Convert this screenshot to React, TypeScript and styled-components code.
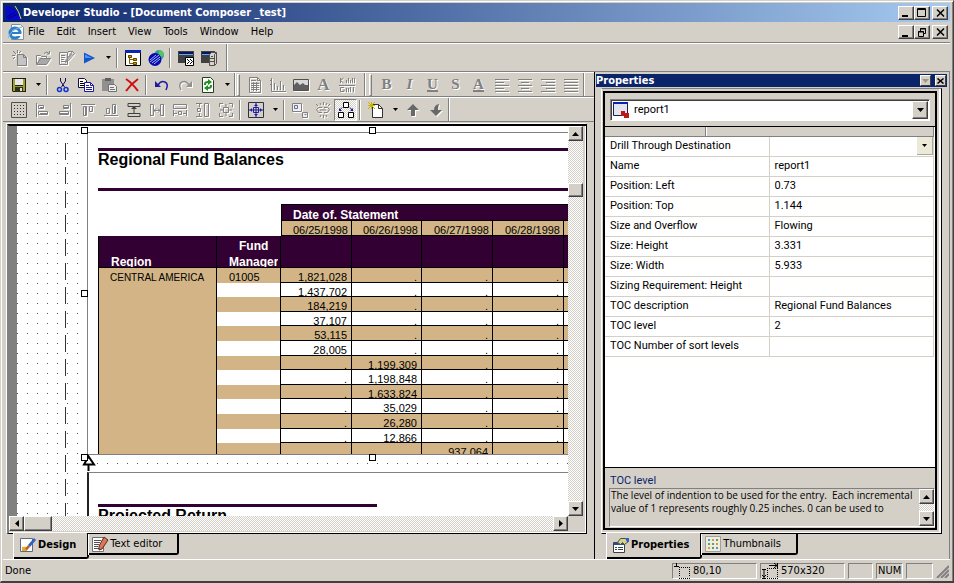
import React from 'react';
import styled, { createGlobalStyle, css } from 'styled-components';

const FACE = '#d4d0c8';
const SHADE = '#808080';
const NAVY = '#0a246a';
const PLUM = '#330033';
const TAN = '#d2b486';
const UI = 'Tahoma, "DejaVu Sans Condensed", "DejaVu Sans", sans-serif';
const SMALL = 'Roboto, "Liberation Sans", Arial, sans-serif';
const REPORT = '"Liberation Sans", Arial, sans-serif';

const Global = createGlobalStyle`
  * { box-sizing: border-box; }
  body { margin: 0; background: ${FACE}; color: #000; font: 11px/14px ${UI}; }
  button, input, select, textarea { font: inherit; color: inherit; margin: 0; padding: 0; border: 0; background: none; border-radius: 0; }
  svg { display: block; flex: none; }
`;

const raised = css`
  background: ${FACE};
  border: 1px solid;
  border-color: #fff #404040 #404040 #fff;
  box-shadow: inset -1px -1px 0 ${SHADE};
`;
const sunken = css`
  border: 1px solid;
  border-color: ${SHADE} #fff #fff ${SHADE};
`;
const dither = css`
  background: repeating-conic-gradient(#fff 0 25%, ${FACE} 0 50%) 0 0 / 2px 2px;
`;

/* ---------- icons ---------- */

const line = (color: string, d: string, w = 1) => <path d={d} fill="none" stroke={color} strokeWidth={w} />;
const fill = (color: string, d: string) => <path d={d} fill={color} />;
const G = '#808080';
const K = '#000';
const B = '#1c1c9c';

const PICS: Record<string, React.ReactNode> = {
  newDoc: <>{fill('#c4c4c4', 'M5 4h7l3 3v9H5z')}{line(G, 'M5.5 4.5h6l3 3v8h-9zM11.5 4.5v3h3M1 1l3 3M5.5 0v3M0 5.5h3M1 9l2-2M9 1L7 3')}</>,
  open: <>{fill('#a8a8a8', 'M2 14l3-6h10l-3 6z')}{line(G, 'M1.5 14V5.5h4l1 1h5v2M1.5 14.5h10l4-6h-10zM9 3.5q3-3 5 0M14.5 1v3h-3')}</>,
  edit: <>{line(G, 'M1.5 2.5h8v12h-8zM3 5.5h4M3 7.5h4M3 9.5h3M3 11.5h5')}{line(G, 'M14.5 1.5l-6 8-1 3 3-2 6-7zM10 1.5h5')}{fill('#a0a0a0', 'M13 3l2 1-5 6-1-1z')}</>,
  play: <>{fill('#1456c8', 'M3 2.5L14 8 3 13.5z')}{fill('#4f94f4', 'M4 4.5L11 8H4z')}</>,
  tree: <>{fill('#fff', 'M0 0h16v16H0z')}{line(K, 'M.5 .5h15v15H.5z')}{fill('#0a24b4', 'M0 0h16v3H0z')}{line('#806000', 'M4.5 7v6.5H8M4.5 9.5H8')}{fill('#c8a000', 'M3 5h4v3H3zM8 8h4v3H8zM8 12h4v3H8z')}{line('#604800', 'M3.5 5.5h3v2h-3zM8.5 8.5h3v2h-3zM8.5 12.5h3v2h-3z')}</>,
  globe: <><circle cx="11" cy="5" r="5" fill="#3c9c8c" />{fill('#54c464', 'M11 0q5 1 5 5l-3 2-2-2z')}<circle cx="7" cy="9.5" r="6.5" fill="#0808b0" />{line('#a0b8f0', 'M2 10l6-5M2 12l9-7M4 13l8-6M6 14l6-5')}</>,
  winCode: <>{fill('#404040', 'M0 1h16v12H0z')}{fill('#0a1464', 'M1 2h14v3H1z')}{fill('#60a8e8', 'M1 4h14v1H1z')}<path d="M7.5 7.5h8v8h-8z" fill="#fff" stroke="#000" />{line(K, 'M9 9l2.5 2.5L9 14M12 9l2.5 2.5L12 14')}</>,
  winServer: <>{fill('#404040', 'M0 1h14v12H0z')}{fill('#0a1464', 'M1 2h12v3H1z')}{fill('#60a8e8', 'M1 4h8v1H1z')}<path d="M8.5 4.5l2-2h5v11l-2 2h-5z" fill="#d8d4cc" stroke="#505050" />{line('#505050', 'M9 8.5h4M9 11.5h4M13.5 4.5v11M13.5 4.5l2-2M10 6.5h2')}</>,
  save: <>{fill('#202010', 'M1 1h14v14H2l-1-1z')}{fill('#a0a030', 'M2 2h2v7h8V2h2v12H2z')}{fill('#e8e8e8', 'M4 2h8v6H4z')}{fill('#303020', 'M4 10h8v5H4z')}{fill('#e0e0e0', 'M9 11h2v3H9z')}</>,
  cut: <>{line('#101050', 'M5.5 1v3l4 6M10.5 1v3l-4 6')}<circle cx="4.5" cy="12.5" r="2" fill="none" stroke="#1030d0" strokeWidth="1.5" /><circle cx="11" cy="12.5" r="2" fill="none" stroke="#1030d0" strokeWidth="1.5" /></>,
  copy: <><path d="M.5 1.5h6l2 2v7h-8z" fill="#fff" stroke="#101040" />{line(K, 'M2 4.5h3M2 6.5h4M2 8.5h4')}<path d="M6.5 5.5h6l3 3v6h-9z" fill="#fff" stroke={B} />{line(B, 'M8 8.5h3M8 10.5h6M8 12.5h6M12.5 5.5v3h3')}</>,
  paste: <>{fill('#909090', 'M1 2h12v12H1z')}{fill('#606060', 'M4 1h6v3H4z')}<path d="M7.5 7.5h6l2 2v5h-8z" fill="#eee" stroke="#707070" />{line('#707070', 'M9 10.5h4M9 12.5h5')}</>,
  del: <>{line('#d01010', 'M2 2q6 4 12 12M14 2Q7 7 2 14', 2)}</>,
  undo: <>{line(B, 'M4 8q3-5 7-3t1 8', 1.5)}{fill(B, 'M1 4v6h6z')}</>,
  redo: <>{line('#909090', 'M12 8q-3-5-7-3t-1 8', 1.5)}{fill('#909090', 'M15 4v6H9z')}</>,
  refresh: <><path d="M2.5 .5h8l3 3v12h-11z" fill="#fff" stroke="#204020" />{line('#209020', 'M5 8V7q0-2 3-2h1M11 8v1q0 2-3 2H7', 2)}{fill('#209020', 'M8 2l4 3-4 3zM8 8l-4 3 4 3z')}</>,
  tableDoc: <>{line(G, 'M2.5 .5h8l3 3v12h-11zM10.5 .5v3h3M4 3.5h5M4 6.5h8M4 8.5h8M4 10.5h8M4 12.5h8M6.5 5v9M9.5 5v9')}</>,
  chart: <>{line(G, 'M1.5 1v13.5H16M4.5 6v7M7.5 9v4M10.5 4v9M13.5 8v5M0 3.5h1M0 7.5h1')}</>,
  image: <>{fill('#d8d8d8', 'M0 2h16v12H0z')}{line('#505050', 'M.5 2.5h15v11H.5z')}{fill('#606060', 'M1 13V8l3-3 3 3 3-2 2 2 3 0v5z')}</>,
  caps: <>{line(G, 'M1.5 1v5M4.5 1l-3 2.5 3 2.5M7.5 3v3M9.5 1v5M11.5 3v3M13.5 1v5M15.5 1v5M0 8.5h16M5 10.5H1.5v4H5v-2M7.5 11v4M9.5 11v4M11.5 10v5M14.5 10v5')}</>,
  alignL: line(G, 'M1 2.5h14M1 5.5h9M1 8.5h14M1 11.5h9M1 14.5h14'),
  alignC: line(G, 'M1 2.5h14M4 5.5h8M1 8.5h14M4 11.5h8M1 14.5h14'),
  alignR: line(G, 'M1 2.5h14M6 5.5h9M1 8.5h14M6 11.5h9M1 14.5h14'),
  alignJ: line(G, 'M1 2.5h14M1 5.5h14M1 8.5h14M1 11.5h14M1 14.5h14'),
  grid: <>{line('#505050', 'M.5 .5h15v15H.5z')}{[3, 6, 9, 12].map((y) => <path key={y} d={`M3 ${y + 0.5}h11`} stroke="#303030" strokeDasharray="1 2" />)}</>,
  objL: line(G, 'M2.5 1v14M4.5 3.5h5v3h-5zM4.5 9.5h9v3h-9zM6 5.5h3M6 11.5h7'),
  objR: line(G, 'M13.5 1v14M6.5 3.5h5v3h-5zM2.5 9.5h9v3h-9zM7 5.5h4M3 11.5h8'),
  objT: line(G, 'M1 2.5h14M3.5 4.5h3v9h-3zM9.5 4.5h3v5h-3zM5.5 5v8'),
  objB: line(G, 'M1 13.5h14M3.5 6.5h3v5h-3zM9.5 2.5h3v9h-3zM11.5 4v7'),
  spaceV: <>{line('#404040', 'M2 1.5h12v3H2zM2 11.5h12v3H2zM8 5v6')}{fill('#404040', 'M5 7l3-3 3 3z')}</>,
  spaceH: line(G, 'M1.5 2v12M1.5 2.5h3v11h-3M14.5 2v12M14.5 2.5h-3v11h3M5 8.5h6M7 6.5l-2 2 2 2M9 6.5l2 2-2 2'),
  sameW: line(G, 'M1.5 2.5h13v4h-13zM1.5 8v6M14.5 8v6M2 11.5h3M11 11.5h3M6.5 9.5h3v3h-3z'),
  sameH: line(G, 'M9.5 1.5h4v13h-4zM1 1.5h6M1 14.5h6M4.5 2v3M4.5 11v3M2.5 6.5h3v3h-3z'),
  sameB: line(G, 'M1.5 5V1.5H5M11 1.5h3.5V5M14.5 11v3.5H11M5 14.5H1.5V11M5.5 5.5h5v5h-5zM8 2v3M8 11v3M2 8h3M11 8h3'),
  center: <>{line('#303040', 'M.5 .5h15v15H.5z')}{line(B, 'M8 1v14M1 8h14M5.5 5.5h5v5h-5z')}{fill(B, 'M6 4h4L8 2zM6 12h4l-2 2zM4 6v4L2 8zM12 6v4l2-2z')}</>,
  resize: <><path d="M.5 1.5h9v8h-9z" fill="#eee" stroke={G} />{line('#6868a8', 'M2.5 3.5h3v3h-3z')}<path d="M10.5 10.5h5v5h-5z" fill="#eee" stroke={G} />{line(G, 'M12.5 12.5h2')}</>,
  link: line(G, 'M7 5.5H3.5l-2 2 2 3H7M9 5.5h3.5l2 2-2 3H9M5 8h6M5 1l1 2M8.5 0v3M12 1l-1 2M5 15l1-2M8.5 16v-3M12 15l-1-2M1 2l2 2M15 2l-2 2'),
  flow: <><g fill="#fff" stroke={K}><path d="M5.5 .5h5v5h-5zM.5 10.5h5v5h-5zM10.5 10.5h5v5h-5z" /></g>{line(B, 'M4 5.5L2 8M12 5.5L14 8')}{fill(B, 'M1 6v3h3zM15 6v3h-3z')}</>,
  newStar: <><path d="M4.5 2.5h6l4 4v9h-10z" fill="#fff" stroke="#303030" />{line('#303030', 'M10.5 2.5v4h4')}{line('#c8b400', 'M0 0l7 7M3.5 0v7M0 3.5h7M7 0L0 7')}</>,
  up: fill('#686868', 'M8 2l6 6h-4v6H6V8H2z'),
  down: fill('#686868', 'M8 14L2 8h4q0-5 5-6-1 3-1 6h4z'),
  design: <><path d="M.5 1.5h12v13H.5z" fill="#fff" stroke="#606880" />{fill('#e8a830', 'M2 10q4-1 6 1l-1 3H2z')}{fill('#3060c0', 'M14 1l2 2-6 7-2-2z')}{fill('#c06020', 'M8 8l2 2-3 3-2-1z')}</>,
  textEdit: <><path d="M.5 1.5h11v14H.5z" fill="#fff" stroke="#707070" />{line('#505050', 'M2 4.5h7M2 6.5h6M2 8.5h5M2 10.5h4M2 12.5h6')}{fill('#d87858', 'M12 1l4 3-6 9-3 1v-4z')}{line('#602818', 'M12 1l4 3-6 9-3 1v-4z')}</>,
  props: <><path d="M.5 5.5h11v10H.5z" fill="#fff" stroke="#404040" />{fill('#2050a0', 'M1 6h11v2H1z')}{line('#404040', 'M2 10.5h2M5 10.5h5M2 12.5h2M5 12.5h5')}<path d="M4.5 5.5l3-4h5l3 3-4 3-2-2-2 2z" fill="#d8d090" stroke="#505030" />{fill('#3060c0', 'M12 1h4v4h-2z')}</>,
  thumbs: <><path d="M.5 .5h15v15H.5z" fill="#f0ece0" stroke="#a0a0a0" />{fill('#40a0c0', 'M3 3h2v2H3zM7 7h2v2H7zM11 11h2v2h-2z')}{fill('#d0a030', 'M7 3h2v2H7zM11 7h2v2h-2zM3 11h2v2H3z')}{fill('#60a050', 'M11 3h2v2h-2zM3 7h2v2H3zM7 11h2v2H7z')}</>,
  report: <>{fill('#e4e4f0', 'M0 1h15v12H0z')}{line('#202040', 'M.5 1.5h14v12H.5z')}{fill('#0a24b4', 'M0 0h15v2H0z')}{fill('#c01818', 'M8 9h4v2h4v5h-5v-2H8z')}</>,
  ie: <><path d="M3.5 .5h9l3 3v12h-12z" fill="#f8f8f0" stroke="#8090a0" /><circle cx="7" cy="9" r="5" fill="none" stroke="#2c80c8" strokeWidth="3" />{fill('#fff', 'M7 10h7v2H7z')}{line('#2c80c8', 'M3 9h9', 2)}{line('#70b8e8', 'M0 14Q3 5 14 3')}</>,
  app: <>{fill('#0808c8', 'M1 1l5 1q6 3 7 7l3 6H1q-1-7 0-14z')}{line('#c8d890', 'M10 1q4 5 6 13')}{line('#000080', 'M2 12l8-5M3 14l9-5')}</>,
  posn: <>{line(K, 'M2.5 0v4M0 3.5h5')}{line(K, 'M5 4.5h1M7 4.5h1M9 4.5h1M11 4.5h1M13 4.5h1M15 4.5h1M5 15.5h1M7 15.5h1M9 15.5h1M11 15.5h1M13 15.5h1M15 15.5h1M5.5 6v1M5.5 8v1M5.5 10v1M5.5 12v1M15.5 6v1M15.5 8v1M15.5 10v1M15.5 12v1')}</>,
  dims: <>{line(K, 'M5 5.5h1M7 5.5h1M9 5.5h1M11 5.5h1M13 5.5h1M15 5.5h1M5 15.5h1M7 15.5h1M9 15.5h1M11 15.5h1M13 15.5h1M15 15.5h1M5.5 7v1M5.5 9v1M5.5 11v1M5.5 13v1M15.5 7v1M15.5 9v1M15.5 11v1M15.5 13v1')}{line(K, 'M0 6.5h4M0 15.5h4M2 7v8M0 12l2 2 2-2M15.5 0v5M7 2.5h8M12 0l3 2.5L12 5')}</>,
  cursor: <><path d="M6.5 1.5L2 9.5h10z" fill="#fff" stroke="#000" strokeWidth="2" />{line(K, 'M6.5 10v6', 2)}</>,
};

const Svg = styled.svg<{ $dim?: boolean }>`
  overflow: visible;
  filter: ${(p) => (p.$dim ? 'drop-shadow(1px 1px 0 #fff)' : 'none')};
`;
const Icon = ({ name, dim }: { name: string; dim?: boolean }) => (
  <Svg width={16} height={16} viewBox="0 0 16 16" $dim={dim} aria-hidden="true">{PICS[name]}</Svg>
);

const TRI = { up: 'M0 4h7L3.5 0z', down: 'M0 0h7L3.5 4z', left: 'M4 0v7L0 3.5z', right: 'M0 0v7l4-3.5z' };
const Tri = ({ dir, color = '#000' }: { dir: keyof typeof TRI; color?: string }) => {
  const tall = dir === 'left' || dir === 'right';
  return <svg width={tall ? 4 : 7} height={tall ? 7 : 4} aria-hidden="true"><path d={TRI[dir]} fill={color} /></svg>;
};
const TinyTri = () => <svg width="5" height="3" aria-hidden="true"><path d="M0 0h5L2.5 3z" /></svg>;

/* ---------- window chrome ---------- */

const Window = styled.div`
  display: flex;
  flex-direction: column;
  height: 100vh;
  overflow: hidden;
  padding: 2px 3px 0 2px;
  background: ${FACE};
  border: 1px solid;
  border-color: ${FACE} #404040 #404040 ${FACE};
  border-bottom-width: 2px;
  box-shadow: inset 1px 1px 0 #fff, inset -1px 0 0 ${SHADE};
`;
const TitleBar = styled.header`
  display: flex;
  align-items: center;
  flex: none;
  height: 19px;
  padding: 0 2px;
  gap: 2px;
  background: linear-gradient(90deg, ${NAVY}, #a6caf0);
`;
const Title = styled.h1`
  flex: 1;
  margin: 0;
  color: #fff;
  font: bold 11px/18px ${UI};
  white-space: nowrap;
`;
const Caption = styled.div`
  display: flex;
  button:last-child { margin-left: 2px; }
`;
const CaptionButton = styled.button`
  ${raised}
  width: 16px;
  height: 14px;
  display: grid;
  place-items: center;
`;
const MenuBar = styled.nav`
  display: flex;
  align-items: center;
  flex: none;
  height: 21px;
  padding: 0 2px 0 5px;
  border-bottom: 1px solid ${SHADE};
`;
const Menus = styled.div`
  display: flex;
  flex: 1;
`;
const MenuItem = styled.button`
  padding: 0 8px 0 4px;
  line-height: 20px;
`;
const ToolRow = styled.div<{ $first?: boolean }>`
  display: flex;
  flex: none;
  height: ${(p) => (p.$first ? 29 : 25)}px;
  padding-left: ${(p) => (p.$first ? 0 : 1)}px;
  border-top: 1px solid #fff;
  border-bottom: 1px solid ${SHADE};
`;
const Strip = styled.div<{ $grip?: boolean; $tight?: boolean }>`
  display: flex;
  align-items: center;
  padding: 0 ${(p) => (p.$grip && !p.$tight ? 1 : 6)}px 0 ${(p) => (p.$tight ? 1 : p.$grip ? 3 : 5)}px;
  border-right: 1px solid ${SHADE};
  box-shadow: 1px 0 0 #fff;
  & + & { margin-left: ${(p) => (p.$tight ? 1 : 2)}px; }
`;
const Grip = styled.span`
  width: 3px;
  height: 22px;
  margin-right: 3px;
  border: 1px solid;
  border-color: #fff ${SHADE} ${SHADE} #fff;
`;
const Tool = styled.button<{ $on?: boolean }>`
  width: 23px;
  height: 22px;
  display: grid;
  place-items: center;
  ${(p) => p.$on && css`${sunken} ${dither}`}
`;
const Drop = styled.button`
  width: 14px;
  height: 22px;
  padding-left: 2px;
  display: grid;
  place-items: center;
`;
const Sep = styled.span`
  width: 2px;
  height: 20px;
  margin: 0 3px 0 2px;
  background: linear-gradient(90deg, ${SHADE} 50%, #fff 50%);
`;
const Glyph = styled.span<{ $italic?: boolean; $under?: boolean; $big?: boolean }>`
  font: ${(p) => (p.$italic ? 'italic ' : '')}bold ${(p) => (p.$big ? 17 : 15)}px/${(p) => (p.$under ? 12 : 15)}px "Liberation Serif", serif;
  color: ${SHADE};
  text-shadow: 1px 1px 0 #fff;
  border-bottom: ${(p) => (p.$under ? `2px solid ${SHADE}` : '0')};
`;

/* ---------- body ---------- */

const Body = styled.main`
  display: flex;
  flex: 1;
  min-height: 0;
`;
const Left = styled.section`
  display: flex;
  flex-direction: column;
  flex: 1;
  min-width: 0;
`;
const DocFrame = styled.div`
  display: grid;
  grid-template: minmax(0, 1fr) 15px / minmax(0, 1fr) 15px;
  flex: 1;
  min-height: 0;
  margin: 2px 7px 0 4px;
  padding-right: 3px;
  padding-bottom: 2px;
  border: solid #000;
  border-left-color: ${SHADE};
  border-width: 2px 1px 1px 2px;
  box-shadow: -1px -1px 0 #fff, inset -1px -1px 0 #fff;
`;
const Canvas = styled.div`
  position: relative;
  overflow: hidden;
  padding: 6px 0 0 78px;
  border-left: 8px solid ${SHADE};
  background-color: #fff;
  background-image:
    repeating-linear-gradient(#333 0 17px, transparent 17px 24px),
    conic-gradient(from 270deg at 1px 1px, #555 90deg, transparent 0);
  background-position: 48px 17px, 10px 7px;
  background-size: 1px 100%, 10px 10px;
  background-repeat: no-repeat, repeat;
`;
const Frame = styled.section<{ $next?: boolean }>`
  width: 570px;
  height: ${(p) => (p.$next ? 320 : 323)}px;
  margin-left: -8px;
  margin-top: ${(p) => (p.$next ? 17 : 0)}px;
  padding: ${(p) => (p.$next ? 31 : 15)}px 0 0 ${(p) => (p.$next ? 9 : 10)}px;
  overflow: hidden;
  background: #fff;
  border: 1px solid ${SHADE};
  border-left: ${(p) => (p.$next ? '2px solid #222' : `1px solid ${SHADE}`)};
`;
const Heading = styled.h2<{ $short?: boolean }>`
  width: ${(p) => (p.$short ? '279px' : 'auto')};
  height: ${(p) => (p.$short ? 'auto' : '43px')};
  margin: 0;
  border-top: 3px solid ${PLUM};
  border-bottom: ${(p) => (p.$short ? 0 : 3)}px solid ${PLUM};
  font: bold 16px/17px ${REPORT};
`;
const Report = styled.table`
  table-layout: fixed;
  width: 537px;
  margin-top: 13px;
  border-spacing: 0;
  font: 11px/19px ${REPORT};
  th, td { padding: 0; vertical-align: top; text-align: right; font-weight: normal; }
`;
const Clip = styled.div<{ $h: number }>`
  height: ${(p) => p.$h}px;
  overflow: hidden;
`;
const DateTitle = styled.th`
  background: ${PLUM};
  border: 1px solid #000;
  color: #fff;
  && { text-align: left; padding-left: 11px; font: bold 12px/20px ${REPORT}; }
`;
const DateCell = styled.th`
  background: ${TAN};
  border-right: 1px solid #000;
  border-bottom: 1px solid #000;
  && { padding-right: 3px; }
  &:nth-child(2) { border-left: 1px solid #000; }
`;
const PlumCell = styled.th`
  background: ${PLUM};
  color: #fff;
  border: 1px solid #000;
  border-left-width: 0;
  border-top-width: 0;
  && { font: bold 12px/16px ${REPORT}; text-align: left; vertical-align: bottom; }
  &:first-child { border-left-width: 1px; }
`;
const HeadText = styled.div`
  height: 31px;
  padding: 2px 0 0 12px;
  overflow: hidden;
  text-align: center;
  width: max-content;
`;
const RegionCell = styled.th`
  background: ${TAN};
  border: 1px solid #000;
  border-top: 0;
  && { text-align: left; padding-left: 11px; font-size: 10px; }
`;
const Row = styled.tr`
  --h: 15px;
  &:nth-child(5n + 2), &:nth-child(5n + 4) { --h: 14px; }
  &:nth-child(odd) td { background: ${TAN}; }
`;
const Cell = styled.td<{ $manager?: boolean }>`
  border-right: 1px solid #000;
  border-bottom: ${(p) => (p.$manager ? 0 : 1)}px solid #000;
  && { text-align: ${(p) => (p.$manager ? 'left' : 'right')}; padding: ${(p) => (p.$manager ? '0 0 0 12px' : '0 4px 0 0')}; }
  > div { height: ${(p) => (p.$manager ? 'var(--h)' : 'calc(var(--h) - 1px)')}; overflow: hidden; }
`;
const Handle = styled.span<{ $x: number; $y: number }>`
  position: absolute;
  left: ${(p) => p.$x}px;
  top: ${(p) => p.$y}px;
  width: 7px;
  height: 7px;
  background: #fff;
  border: 1px solid #000;
`;
const Marker = styled.span`
  position: absolute;
  left: 65px;
  top: 329px;
`;
const Scroll = styled.div<{ $row?: boolean }>`
  ${dither}
  display: flex;
  flex-direction: ${(p) => (p.$row ? 'row' : 'column')};
  min-height: 0;
`;
const ScrollButton = styled.button<{ $end?: boolean }>`
  ${raised}
  flex: none;
  width: 15px;
  height: 15px;
  display: grid;
  place-items: center;
  ${(p) => p.$end && 'margin-top: auto;'}
`;
const HEnd = styled(ScrollButton)`margin-left: auto;`;
const Gap = styled.span`height: 42px;`;
const Thumb = styled.span<{ $w: number; $h: number }>`
  ${raised}
  width: ${(p) => p.$w}px;
  height: ${(p) => p.$h}px;
`;

const Tabs = styled.div<{ $inset: number }>`
  display: flex;
  align-items: flex-start;
  flex: none;
  height: 25px;
  padding-left: ${(p) => p.$inset}px;
`;
const Tab = styled.button<{ $active?: boolean }>`
  display: flex;
  align-items: center;
  gap: 2px;
  height: ${(p) => (p.$active ? 26 : 21)}px;
  padding: 0 ${(p) => (p.$active ? 11 : 15)}px 0 ${(p) => (p.$active ? 6 : 3)}px;
  margin-top: ${(p) => (p.$active ? -1 : 0)}px;
  background: ${FACE};
  border: solid #000;
  border-width: 0 2px 2px 0;
  border-bottom-right-radius: 3px;
  box-shadow: -1px 0 0 #fff;
  font-weight: ${(p) => (p.$active ? 'bold' : 'normal')};
  white-space: nowrap;
  z-index: 1;
`;

/* ---------- properties ---------- */

const Right = styled.aside`
  display: flex;
  flex-direction: column;
  flex: none;
  width: 356px;
  padding: 2px 0 0;
  border-left: 1px solid #000;
  border-right: 1px solid ${SHADE};
`;
const PanelHead = styled.div`
  display: flex;
  align-items: center;
  gap: 4px;
  height: 13px;
  flex: none;
  margin: 0 2px 0 1px;
  padding-right: 1px;
  background: ${NAVY};
  color: #fff;
`;
const PanelTitle = styled.h2`
  flex: 1;
  margin: 0;
  font: bold 11px/13px ${UI};
`;
const MiniButton = styled.button`
  ${raised}
  box-shadow: none;
  width: 11px;
  height: 11px;
  display: grid;
  place-items: center;
`;
const Outer = styled.div`
  display: flex;
  flex: 1;
  min-height: 0;
  margin: 1px 7px 0 6px;
  padding: 2px 4px 3px 1px;
  border: 1px solid;
  border-color: ${SHADE} #000 #000 #fff;
  box-shadow: inset -2px -1px 0 #fff;
`;
const Inner = styled.div`
  display: flex;
  flex-direction: column;
  flex: 1;
  min-width: 0;
  border: 2px solid #000;
`;
const ComboRow = styled.div`
  padding: 6px 5px 5px;
  border-bottom: 1px solid #000;
`;
const Combo = styled.label`
  ${sunken}
  display: flex;
  align-items: center;
  height: 22px;
  padding: 1px 1px 1px 2px;
  gap: 5px;
  background: #fff;
  box-shadow: inset 1px 1px 0 #404040;
`;
const Select = styled.select`
  appearance: none;
  flex: 1;
  font: 11px/16px ${SMALL};
  outline: none;
`;
const ComboArrow = styled.span`
  ${raised}
  width: 16px;
  height: 18px;
  display: grid;
  place-items: center;
`;
const ListPane = styled.div`
  flex: 1;
  min-height: 0;
  background: #fff;
  border-bottom: 1px solid #000;
  padding-right: 1px;
`;
const HeadStrip = styled.div`
  display: flex;
  height: 10px;
  background: ${FACE};
  border-bottom: 1px solid ${SHADE};
  border-right: 1px solid ${SHADE};
`;
const HeadCell = styled.span`
  width: 101px;
  border-right: 1px solid ${SHADE};
  box-shadow: 1px 0 0 #fff;
`;
const PropTable = styled.table`
  width: 100%;
  table-layout: fixed;
  border-spacing: 0;
  font: 11px/16px ${SMALL};
  th, td {
    height: 20px;
    padding: 0 0 2px 5px;
    border-right: 1px solid ${FACE};
    border-bottom: 1px solid ${FACE};
    text-align: left;
    font-weight: normal;
    white-space: nowrap;
  }
  th { width: 50%; }
`;
const DropCell = styled.div`
  display: flex;
  justify-content: flex-end;
  height: 17px;
`;
const FlatDrop = styled.button`
  width: 16px;
  height: 18px;
  display: grid;
  place-items: center;
  background: #ece9d8;
  border: solid #aca899;
  border-width: 0 1px 1px 0;
`;
const Help = styled.div`
  flex: none;
  height: 60px;
  padding: 5px 0 1px 4px;
  font: 11px/16px ${SMALL};
  label { display: block; padding-left: 1px; color: ${NAVY}; line-height: 15px; }
`;
const HelpBox = styled.div`
  ${sunken}
  display: flex;
  height: 39px;
`;
const HelpText = styled.textarea`
  flex: 1;
  min-width: 0;
  resize: none;
  outline: none;
  overflow: hidden;
  padding-left: 1px;
  white-space: pre;
  font: 10px/13px "Open Sans", ${SMALL};
`;

/* ---------- status ---------- */

const Status = styled.footer`
  display: flex;
  flex: none;
  align-items: center;
  gap: 3px;
  height: 22px;
  padding: 0 1px 0 2px;
  border-top: 1px solid #fff;
`;
const Done = styled.span`flex: 1;`;
const Field = styled.span<{ $w: number }>`
  ${sunken}
  display: flex;
  align-items: center;
  gap: 3px;
  width: ${(p) => p.$w}px;
  height: 16px;
  padding-left: 1px;
`;

/* ---------- data ---------- */

const PROPS: [string, string][] = [
  ['Drill Through Destination', ''],
  ['Name', 'report1'],
  ['Position: Left', '0.73'],
  ['Position: Top', '1.144'],
  ['Size and Overflow', 'Flowing'],
  ['Size: Height', '3.331'],
  ['Size: Width', '5.933'],
  ['Sizing Requirement: Height', ''],
  ['TOC description', 'Regional Fund Balances'],
  ['TOC level', '2'],
  ['TOC Number of sort levels', ''],
];
const VALUES: [number, string][] = [
  [0, '1,821,028'], [0, '1,437,702'], [0, '184,219'], [0, '37,107'], [0, '53,115'], [0, '28,005'],
  [1, '1,199,309'], [1, '1,198,848'], [1, '1,633,824'], [1, '35,029'], [1, '26,280'], [1, '12,866'],
  [2, '937,064'],
];
const DATES = ['06/25/1998', '06/26/1998', '06/27/1998', '06/28/1998', ''];
const HELP = 'The level of indention to be used for the entry.  Each incremental\nvalue of 1 represents roughly 0.25 inches. 0 can be used to';

const CaptionSet = ({ restore }: { restore?: boolean }) => (
  <Caption>
    <CaptionButton aria-label="Minimize"><svg width="10" height="9"><path d="M1 7h6v2H1z" /></svg></CaptionButton>
    <CaptionButton aria-label={restore ? 'Restore' : 'Maximize'}>
      <svg width="10" height="9" fill="none" stroke="#000">
        {restore ? <path d="M3.5 3V.5h5v5H7M3 1h6M1.5 3.5h5v5h-5zM1 4h6" /> : <path d="M.5 .5h8v8h-8zM0 1.5h9" />}
      </svg>
    </CaptionButton>
    <CaptionButton aria-label="Close"><svg width="9" height="8"><path d="M1 .5l7 7M8 .5l-7 7" stroke="#000" strokeWidth="1.5" /></svg></CaptionButton>
  </Caption>
);

const T = ({ n, dim, on }: { n: string; dim?: boolean; on?: boolean }) => (
  <Tool aria-label={n} $on={on}><Icon name={n} dim={dim} /></Tool>
);
const D = () => <Drop aria-label="More"><TinyTri /></Drop>;

export default function App() {
  return (
    <>
      <Global />
      <Window>
        <TitleBar>
          <Icon name="app" />
          <Title>Developer Studio - [Document Composer _test]</Title>
          <CaptionSet />
        </TitleBar>
        <MenuBar>
          <Icon name="ie" />
          <Menus>
            {['File', 'Edit', 'Insert', 'View', 'Tools', 'Window', 'Help'].map((m) => <MenuItem key={m}>{m}</MenuItem>)}
          </Menus>
          <CaptionSet restore />
        </MenuBar>
        <ToolRow $first>
          <Strip>
            <T n="newDoc" dim /><T n="open" dim /><T n="edit" dim />
            <T n="play" /><D /><Sep />
            <T n="tree" /><T n="globe" /><Sep />
            <T n="winCode" /><T n="winServer" />
          </Strip>
        </ToolRow>
        <Body>
          <Left>
            <ToolRow>
              <Strip $grip>
                <T n="save" /><D /><Sep />
                <T n="cut" /><T n="copy" /><T n="paste" /><T n="del" /><Sep />
                <T n="undo" /><T n="redo" dim /><T n="refresh" /><D />
              </Strip>
              <Strip $grip $tight>
                <Grip />
                <T n="tableDoc" dim /><T n="chart" dim /><T n="image" dim />
                <Tool aria-label="Text"><Glyph $big>A</Glyph></Tool>
                <T n="caps" dim />
              </Strip>
              <Strip $grip>
                <Grip />
                <Tool aria-label="Bold"><Glyph>B</Glyph></Tool>
                <Tool aria-label="Italic"><Glyph $italic>I</Glyph></Tool>
                <Tool aria-label="Underline"><Glyph $under>U</Glyph></Tool>
                <Tool aria-label="Strike"><Glyph>S</Glyph></Tool>
                <Tool aria-label="Colour"><Glyph $under>A</Glyph></Tool>
                <T n="alignL" dim /><T n="alignC" dim /><T n="alignR" dim /><T n="alignJ" dim />
              </Strip>
            </ToolRow>
            <ToolRow>
              <Strip $grip>
                <T n="grid" />
                {['objL', 'objR', 'objT', 'objB'].map((n) => <T key={n} n={n} dim />)}
                <T n="spaceV" />
                {['spaceH', 'sameW', 'sameH', 'sameB'].map((n) => <T key={n} n={n} dim />)}
                <Sep /><T n="center" /><D /><Sep />
                <T n="resize" dim /><T n="link" dim /><T n="flow" on /><Sep />
                <T n="newStar" /><D /><T n="up" dim /><T n="down" dim />
              </Strip>
            </ToolRow>
            <DocFrame>
              <Canvas>
                <Frame>
                  <Heading>Regional Fund Balances</Heading>
                  <Report>
                    <colgroup>
                      <col width="119" /><col width="64" /><col width="71" /><col width="70" />
                      <col width="71" /><col width="71" /><col width="71" />
                    </colgroup>
                    <thead>
                      <tr>
                        <td colSpan={2} />
                        <DateTitle colSpan={5}><Clip $h={15}>Date of. Statement</Clip></DateTitle>
                      </tr>
                      <tr>
                        <td colSpan={2} />
                        {DATES.map((d) => <DateCell key={d}><Clip $h={14}>{d}</Clip></DateCell>)}
                      </tr>
                      <tr>
                        <PlumCell><HeadText><br />Region</HeadText></PlumCell>
                        <PlumCell><HeadText>Fund<br />Manager</HeadText></PlumCell>
                        {DATES.map((d) => <PlumCell key={d} />)}
                      </tr>
                    </thead>
                    <tbody>
                      {VALUES.map(([col, value], i) => (
                        <Row key={value}>
                          {i === 0 && <RegionCell rowSpan={VALUES.length}>CENTRAL AMERICA</RegionCell>}
                          <Cell $manager><div>{i === 0 ? '01005' : ''}</div></Cell>
                          {DATES.map((d, c) => <Cell key={d}><div>{c === col ? value : '.'}</div></Cell>)}
                        </Row>
                      ))}
                    </tbody>
                  </Report>
                </Frame>
                <Frame $next>
                  <Heading $short>Projected Return</Heading>
                </Frame>
                <Marker><Icon name="cursor" /></Marker>
                <Handle $x={64} $y={1} />
                <Handle $x={352} $y={1} />
                <Handle $x={64} $y={164} />
                <Handle $x={64} $y={328} />
                <Handle $x={352} $y={328} />
              </Canvas>
              <Scroll>
                <ScrollButton aria-label="Scroll up"><Tri dir="up" /></ScrollButton>
                <Gap />
                <Thumb $w={15} $h={14} />
                <ScrollButton $end aria-label="Scroll down"><Tri dir="down" /></ScrollButton>
              </Scroll>
              <Scroll $row>
                <ScrollButton aria-label="Scroll left"><Tri dir="left" /></ScrollButton>
                <Thumb $w={28} $h={15} />
                <HEnd aria-label="Scroll right"><Tri dir="right" /></HEnd>
              </Scroll>
            </DocFrame>
            <Tabs $inset={11}>
              <Tab $active><Icon name="design" />Design</Tab>
              <Tab><Icon name="textEdit" />Text editor</Tab>
            </Tabs>
          </Left>
          <Right>
            <PanelHead>
              <PanelTitle>Properties</PanelTitle>
              <MiniButton aria-label="Panel menu"><Tri dir="down" color="#a09880" /></MiniButton>
              <MiniButton aria-label="Close panel"><svg width="7" height="6"><path d="M.5 .5l6 5M6.5 .5l-6 5" stroke="#000" strokeWidth="1.5" /></svg></MiniButton>
            </PanelHead>
            <Outer>
              <Inner>
                <ComboRow>
                  <Combo>
                    <Icon name="report" />
                    <Select aria-label="Object"><option>report1</option></Select>
                    <ComboArrow><Tri dir="down" /></ComboArrow>
                  </Combo>
                </ComboRow>
                <ListPane>
                  <HeadStrip><HeadCell /></HeadStrip>
                  <PropTable>
                    <tbody>
                      {PROPS.map(([name, value], i) => (
                        <tr key={name}>
                          <th scope="row">{name}</th>
                          <td>{i === 0 ? <DropCell><FlatDrop aria-label="Choose"><TinyTri /></FlatDrop></DropCell> : value}</td>
                        </tr>
                      ))}
                    </tbody>
                  </PropTable>
                </ListPane>
                <Help>
                  <label htmlFor="help">TOC level</label>
                  <HelpBox>
                    <HelpText id="help" readOnly defaultValue={HELP} />
                    <Scroll>
                      <ScrollButton aria-label="Scroll up"><Tri dir="up" /></ScrollButton>
                      <ScrollButton $end aria-label="Scroll down"><Tri dir="down" /></ScrollButton>
                    </Scroll>
                  </HelpBox>
                </Help>
              </Inner>
            </Outer>
            <Tabs $inset={12}>
              <Tab $active><Icon name="props" />Properties</Tab>
              <Tab><Icon name="thumbs" />Thumbnails</Tab>
            </Tabs>
          </Right>
        </Body>
        <Status>
          <Done>Done</Done>
          <Field $w={85}><Icon name="posn" />80,10</Field>
          <Field $w={85}><Icon name="dims" />570x320</Field>
          <Field $w={25} />
          <Field $w={27}>NUM</Field>
          <Field $w={27} />
          <svg width="13" height="14" aria-hidden="true"><path d="M1 14L13 2M5 14l8-8M9 14l4-4" stroke={SHADE} strokeWidth="2" /></svg>
        </Status>
      </Window>
    </>
  );
}
